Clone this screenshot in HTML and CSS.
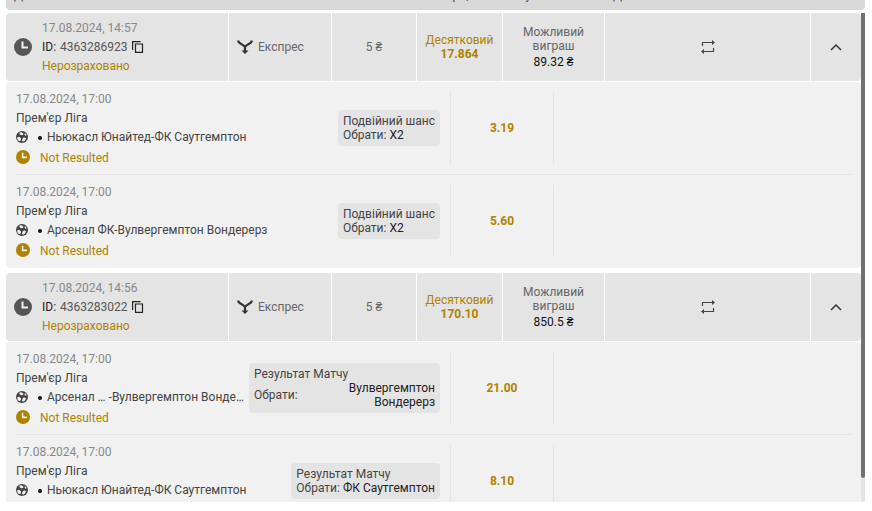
FILE: index.html
```
<!DOCTYPE html>
<html lang="uk">

<head>
    <meta charset="utf-8">
    <meta name="viewport" content="width=device-width, initial-scale=1">
    <title>Мої ставки</title>
    <link rel="stylesheet" href="styles.css">
</head>

<body>

<svg class="sprite" aria-hidden="true">
    <symbol id="clock" viewBox="0 0 18 18">
        <circle cx="9" cy="9" r="9" fill="currentColor"/>
        <path d="M8.500 3.500v6h5.500" fill="none" stroke="#f1f1f1" stroke-width="2"/>
    </symbol>
    <symbol id="copy" viewBox="0 0 12 12">
        <path d="M.6 9V.6H8.500M3.500 3h7v8.400h-7z" fill="none" stroke="currentColor" stroke-width="1.2"/>
    </symbol>
    <symbol id="express" viewBox="0 0 16 14">
        <path d="M1.200 .5C1.200 4 6 3.500 8 7C10 3.500 14.800 4 14.800 .5M8 6v6" fill="none" stroke="currentColor" stroke-width="2.2"/>
        <path d="M4.500 10.500h7L8 14z" fill="currentColor"/>
    </symbol>
    <symbol id="repeat" viewBox="0 0 14 14">
        <path d="M1.500 6V2.500H12M12.500 8v3.500H2" fill="none" stroke="currentColor" stroke-width="1.2"/>
        <path d="M11 0l3 2.500-3 2.500zM3 9l-3 2.500L3 14z" fill="currentColor"/>
    </symbol>
    <symbol id="up" viewBox="0 0 12 8">
        <path d="M1 7l5-5 5 5" fill="none" stroke="currentColor" stroke-width="1.5"/>
    </symbol>
    <symbol id="ball" viewBox="0 0 12 12">
        <circle cx="6" cy="6" r="6" fill="currentColor"/>
        <path d="M3.500 1.500L5.500 1.200 7.500 2.800 7 4 5 4.200 3.500 3zM9 2L10.800 4 9.200 4.800 8.500 3.500zM1 6.500L3 5.800 5 7.200 4.800 9.500 3 10 1.800 9zM7 6.800L9 6.500 10 7.500 9 9.500 7 10.800 6 9.500z" fill="#f1f1f1"/>
    </symbol>
</svg>

<div class="list-head">
    <span class="left">Дата</span>
    <span>Тип</span>
    <span>Ставка</span>
    <span>Коефіцієнт</span>
    <span>Сума виплат</span>
    <span class="left">Дії</span>
</div>

<main class="list">
    <div class="tickets">

        <section class="ticket">
            <header class="ticket-head">
                <div class="cell info">
                    <svg class="icon-clock"><use href="#clock"/></svg>
                    <div>
                        <div class="date">17.08.2024, 14:57</div>
                        <div class="ticket-id"><b>ID:</b> 4363286923 <button type="button" class="copy" aria-label="Копіювати"><svg><use href="#copy"/></svg></button></div>
                        <div class="gold">Нерозраховано</div>
                    </div>
                </div>
                <div class="cell type"><svg><use href="#express"/></svg>Експрес</div>
                <div class="cell">5 ₴</div>
                <div class="cell gold">Десятковий<strong>17.864</strong></div>
                <div class="cell">Можливий виграш<span class="win">89.32 ₴</span></div>
                <div class="cell"><button type="button" aria-label="Повторити"><svg class="icon-repeat"><use href="#repeat"/></svg></button></div>
                <div class="cell"><button type="button" aria-label="Згорнути"><svg class="icon-up"><use href="#up"/></svg></button></div>
            </header>
            <div class="legs">
                <article class="leg">
                    <div class="event">
                        <div class="match">
                            <div class="date">17.08.2024, 17:00</div>
                            <div>Прем'єр Ліга</div>
                            <div class="teams"><svg><use href="#ball"/></svg><i class="dot"></i><span>Ньюкасл Юнайтед-ФК Саутгемптон</span></div>
                            <div class="status"><svg><use href="#clock"/></svg>Not Resulted</div>
                        </div>
                        <div class="pick">
                            <div>Подвійний шанс</div>
                            <div class="choice"><span>Обрати:</span><em>X2</em></div>
                        </div>
                    </div>
                    <div class="odds">3.19</div>
                    <div class="score"></div>
                </article>
                <article class="leg">
                    <div class="event">
                        <div class="match">
                            <div class="date">17.08.2024, 17:00</div>
                            <div>Прем'єр Ліга</div>
                            <div class="teams"><svg><use href="#ball"/></svg><i class="dot"></i><span>Арсенал ФК-Вулвергемптон Вондерерз</span></div>
                            <div class="status"><svg><use href="#clock"/></svg>Not Resulted</div>
                        </div>
                        <div class="pick">
                            <div>Подвійний шанс</div>
                            <div class="choice"><span>Обрати:</span><em>X2</em></div>
                        </div>
                    </div>
                    <div class="odds">5.60</div>
                    <div class="score"></div>
                </article>
            </div>
        </section>

        <section class="ticket">
            <header class="ticket-head">
                <div class="cell info">
                    <svg class="icon-clock"><use href="#clock"/></svg>
                    <div>
                        <div class="date">17.08.2024, 14:56</div>
                        <div class="ticket-id"><b>ID:</b> 4363283022 <button type="button" class="copy" aria-label="Копіювати"><svg><use href="#copy"/></svg></button></div>
                        <div class="gold">Нерозраховано</div>
                    </div>
                </div>
                <div class="cell type"><svg><use href="#express"/></svg>Експрес</div>
                <div class="cell">5 ₴</div>
                <div class="cell gold">Десятковий<strong>170.10</strong></div>
                <div class="cell">Можливий виграш<span class="win">850.5 ₴</span></div>
                <div class="cell"><button type="button" aria-label="Повторити"><svg class="icon-repeat"><use href="#repeat"/></svg></button></div>
                <div class="cell"><button type="button" aria-label="Згорнути"><svg class="icon-up"><use href="#up"/></svg></button></div>
            </header>
            <div class="legs">
                <article class="leg">
                    <div class="event">
                        <div class="match">
                            <div class="date">17.08.2024, 17:00</div>
                            <div>Прем'єр Ліга</div>
                            <div class="teams"><svg><use href="#ball"/></svg><i class="dot"></i><span>Арсенал … -Вулвергемптон Вонде…</span></div>
                            <div class="status"><svg><use href="#clock"/></svg>Not Resulted</div>
                        </div>
                        <div class="pick pick-wide">
                            <div>Результат Матчу</div>
                            <div class="choice"><span>Обрати:</span><em>Вулвергемптон Вондерерз</em></div>
                        </div>
                    </div>
                    <div class="odds">21.00</div>
                    <div class="score"></div>
                </article>
                <article class="leg">
                    <div class="event">
                        <div class="match">
                            <div class="date">17.08.2024, 17:00</div>
                            <div>Прем'єр Ліга</div>
                            <div class="teams"><svg><use href="#ball"/></svg><i class="dot"></i><span>Ньюкасл Юнайтед-ФК Саутгемптон</span></div>
                            <div class="status"><svg><use href="#clock"/></svg>Not Resulted</div>
                        </div>
                        <div class="pick">
                            <div>Результат Матчу</div>
                            <div class="choice"><span>Обрати:</span><em>ФК Саутгемптон</em></div>
                        </div>
                    </div>
                    <div class="odds">8.10</div>
                    <div class="score"></div>
                </article>
            </div>
        </section>

    </div>
    <div class="scrollbar"><div class="thumb"></div></div>
</main>

</body>

</html>
```

FILE: styles.css
```
* {
    box-sizing: border-box;
}

body {
    margin: 0;
    height: 100vh;
    padding: 0 7px 9px 6px;
    display: flex;
    flex-direction: column;
    gap: 3px;
    background: #fff;
    color: #444;
    font: 12px/14px Roboto, sans-serif;
    overflow: hidden;
}

button {
    display: flex;
    padding: 0;
    border: 0;
    background: none;
    color: inherit;
    cursor: pointer;
}

.sprite {
    display: none;
}

/* header row is scrolled most of the way out of view */
.list-head {
    flex: none;
    height: 30px;
    margin-top: -20px;
    padding-right: 4px;
    display: grid;
    grid-template-columns: 222fr 102fr 84fr 85fr 101fr 256fr;
    gap: 1px;
    align-items: center;
    text-align: center;
    background: #d9d9d9;
    border-radius: 4px;
}

.list-head .left {
    padding-left: 8px;
    text-align: left;
}

.list {
    flex: 1;
    min-height: 0;
    display: flex;
}

.tickets {
    flex: 1;
    min-width: 0;
    overflow: hidden;
}

.scrollbar {
    width: 4px;
    background: #e4e4e4;
    border-radius: 2px;
}

.thumb {
    height: 95%;
    background: #707070;
    border-radius: 0 0 2px 2px;
}

.ticket {
    margin-bottom: 5px;
}

.ticket-head {
    display: grid;
    grid-template-columns: 222fr 102fr 84fr 85fr 101fr 205fr 50fr;
    gap: 1px;
    min-height: 68px;
    margin-bottom: 1px;
    border-radius: 4px;
    overflow: hidden;
}

.cell {
    display: flex;
    flex-direction: column;
    align-items: center;
    justify-content: center;
    background: #e4e4e4;
    color: #666;
    text-align: center;
}

.info {
    flex-direction: row;
    justify-content: flex-start;
    gap: 10px;
    padding: 0 8px;
    line-height: 19px;
    text-align: left;
}

.type {
    flex-direction: row;
    justify-content: flex-start;
    gap: 5px;
    padding: 0 8px;
}

.type svg {
    width: 16px;
    height: 14px;
    color: #333;
}

.icon-clock {
    width: 18px;
    height: 18px;
    color: #555;
}

.ticket-id {
    display: flex;
    align-items: center;
    gap: 4px;
    color: #555;
}

.ticket-id b {
    font-weight: 400;
    color: #222;
}

.copy svg {
    width: 12px;
    height: 12px;
    color: #222;
}

.date {
    color: #888;
}

.gold {
    color: #b08200;
}

.win {
    margin-top: 2px;
    color: #111;
}

.icon-repeat {
    width: 14px;
    height: 14px;
    color: #444;
}

.icon-up {
    width: 12px;
    height: 8px;
    color: #333;
}

.legs {
    padding: 0 9px 0 10px;
    background: #f1f1f1;
    border-radius: 4px;
}

.leg {
    display: grid;
    grid-template-columns: 434fr 103fr 299fr;
    padding: 10px 0;
    border-bottom: 1px solid #e4e4e4;
}

.leg:last-child {
    border-color: transparent;
}

.event {
    display: flex;
    align-items: center;
    justify-content: space-between;
    gap: 1px;
    min-width: 0;
    padding-right: 10px;
}

.match {
    min-width: 0;
    margin: -2px 0 -4px;
    line-height: 19px;
}

.teams {
    display: flex;
    align-items: center;
}

.teams svg {
    flex: none;
    width: 12px;
    height: 12px;
    margin-bottom: 2px;
}

.teams span {
    overflow: hidden;
    text-overflow: ellipsis;
    white-space: nowrap;
}

.dot {
    flex: none;
    width: 4px;
    height: 4px;
    margin: 0 5px 0 10px;
    border-radius: 50%;
    background: #111;
}

.status {
    display: flex;
    align-items: center;
    gap: 10px;
    margin-top: 2px;
    color: #b08200;
}

.status svg {
    width: 14px;
    height: 14px;
    margin-bottom: 3px;
}

.pick {
    flex: none;
    padding: 4px 5px;
    background: #e4e4e4;
    border-radius: 4px;
}

.pick-wide {
    width: 191px;
}

.choice {
    display: flex;
    align-items: center;
    gap: 3px;
}

.choice em {
    flex: 1;
    font-style: normal;
    color: #222;
}

.pick-wide em {
    padding-left: 40px;
    text-align: right;
}

.odds,
.score {
    display: flex;
    align-items: center;
    justify-content: center;
    min-height: 72px;
    border-left: 1px solid #e4e4e4;
    color: #b08200;
    font-weight: 700;
}
```
